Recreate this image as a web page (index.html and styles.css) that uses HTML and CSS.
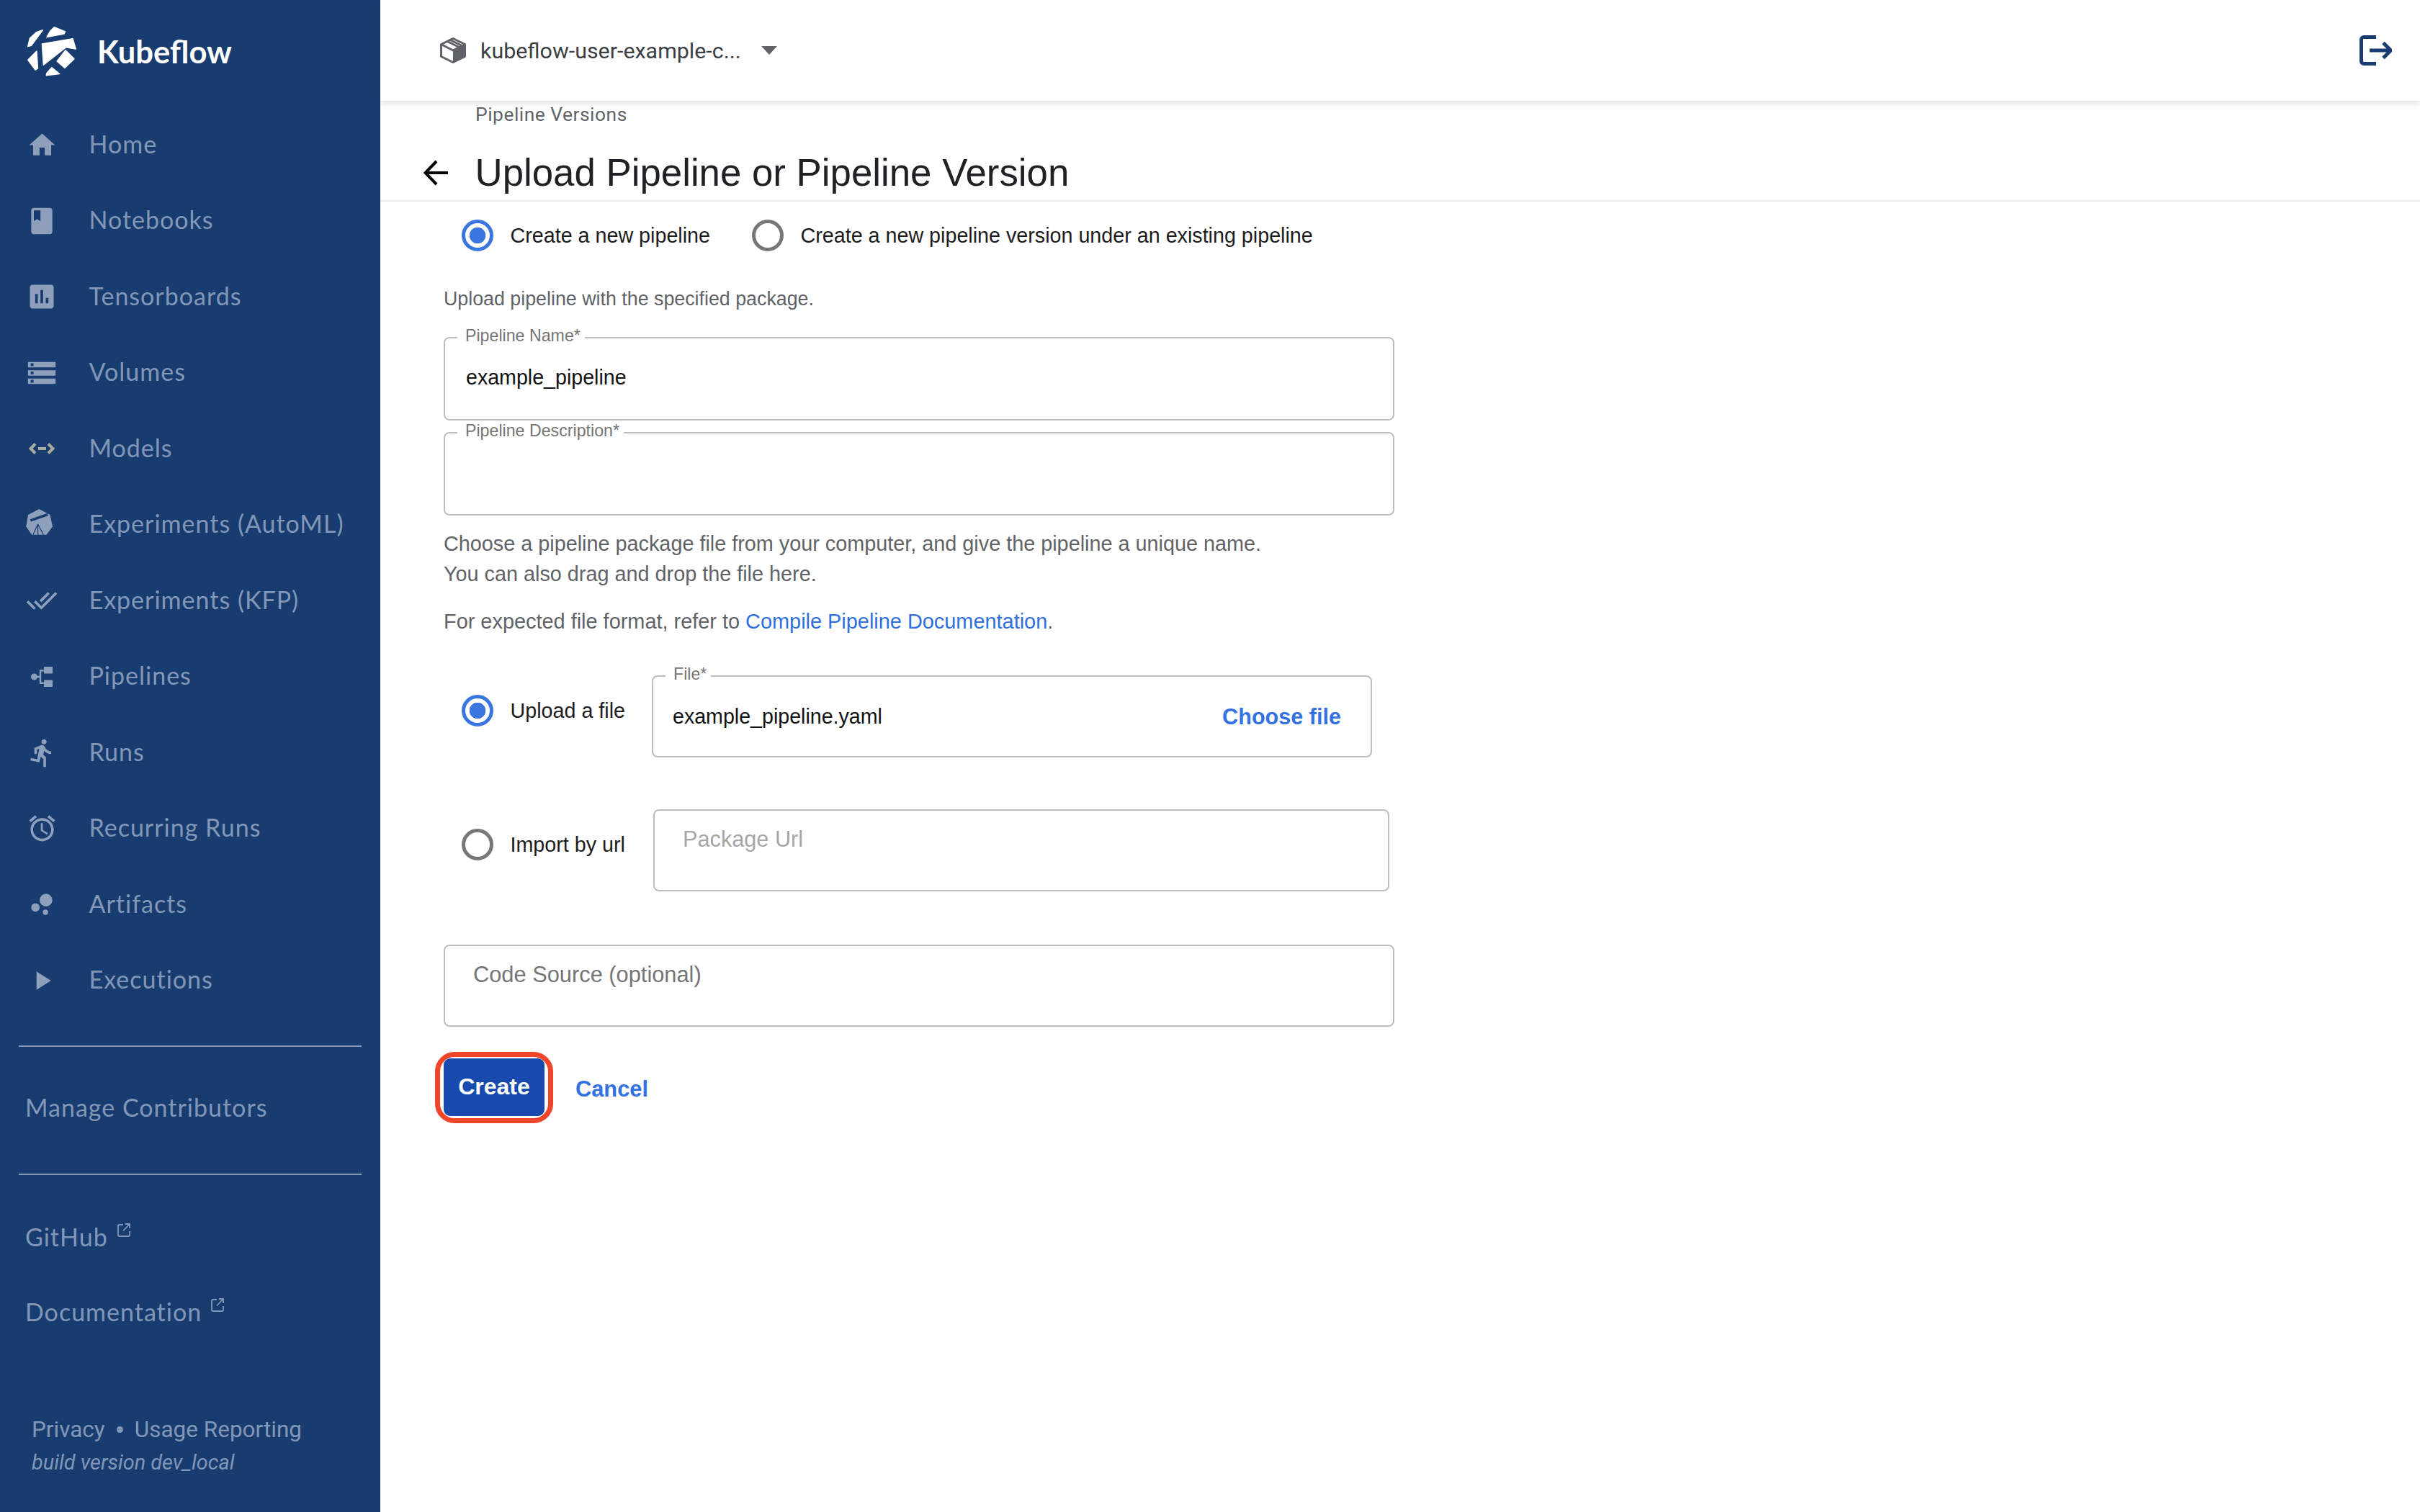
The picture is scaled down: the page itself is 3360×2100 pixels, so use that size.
FILE: index.html
```html
<!DOCTYPE html>
<html lang="en">
<head>
<meta charset="utf-8">
<title>Upload Pipeline or Pipeline Version</title>
<link rel="stylesheet" href="styles.css">
</head>
<body>
<div class="app">
  <aside class="sidebar">
    <div class="brand">
      <svg class="brand-logo" viewBox="0 0 68 69"><g fill="#fff" stroke="#fff" stroke-width="1.5" stroke-linejoin="round">
        <path d="M21.4 4.7 12.2 8 3.4 16.3 .8 27.5 5.4 26.3 12.9 16.3z"/>
        <path d="M37.3 .8 52.5 7 51 10 27 14.5 31.6 6.3z"/>
        <path d="M20.4 24 63 16.8 67.3 31 53.6 28.7 22.4 53.2z"/>
        <path d="M52.9 32.8 65 44.7 51.9 57.5 41.2 48z"/>
        <path d="M12.9 34 .8 46.3 11.2 60.2 14.4 58z"/>
        <path d="M33.9 56.8 44.6 65.5 26.3 67.8 26.8 64.7z"/>
      </g></svg>
      <span class="brand-name">Kubeflow</span>
    </div>
    <nav class="nav">
      <a class="nav-item"><span class="nav-icon"><svg viewBox="0 0 24 24" width="43" height="43"><path d="M10 20v-6h4v6h5v-8h3L12 3 2 12h3v8z"/></svg></span>Home</a>
      <a class="nav-item"><span class="nav-icon"><svg viewBox="0 0 24 24" width="44" height="44"><path d="M18 2H6c-1.1 0-2 .9-2 2v16c0 1.1.9 2 2 2h12c1.100 0 2-.9 2-2V4c0-1.100-.9-2-2-2zM6 4h5v8l-2.500-1.500L6 12V4z"/></svg></span>Notebooks</a>
      <a class="nav-item"><span class="nav-icon"><svg viewBox="0 0 24 24" width="44" height="44"><path d="M19 3H5c-1.100 0-2 .9-2 2v14c0 1.100.9 2 2 2h14c1.100 0 2-.9 2-2V5c0-1.100-.9-2-2-2zM9 17H7v-7h2v7zm4 0h-2V7h2v10zm4 0h-2v-4h2v4z"/></svg></span>Tensorboards</a>
      <a class="nav-item"><span class="nav-icon"><svg viewBox="0 0 24 24" width="46" height="46"><path d="M2 20h20v-4H2v4zm2-3h2v2H4v-2zM2 4v4h20V4H2zm4 3H4V5h2v2zm-4 7h20v-4H2v4zm2-3h2v2H4v-2z"/></svg></span>Volumes</a>
      <a class="nav-item"><span class="nav-icon"><svg viewBox="0 0 36 16" width="36" height="16" class="icon-models"><path d="M9 1.500 2.500 8 9 14.500M27 1.500 33.500 8 27 14.500M13 8h11"/></svg></span>Models</a>
      <a class="nav-item"><span class="nav-icon"><svg viewBox="0 0 44 44" width="44" height="44" class="icon-katib"><path class="katib-body" d="M18.300 0 33.500 8 37 24.200 28.500 35.800H8.100L.3 24.200 3 8z"/><path class="katib-cut" d="M6.400 15.800 30.200 7.500"/><path class="katib-line" d="M16.600 21 9.800 35.800M16.600 21 24.400 35.800M16.600 21V35.800"/></svg></span>Experiments (AutoML)</a>
      <a class="nav-item"><span class="nav-icon"><svg viewBox="0 0 24 24" width="44" height="44"><path d="M18 7l-1.410-1.410-6.340 6.340 1.410 1.410L18 7zm4.240-1.410L11.660 16.170 7.480 12l-1.410 1.410L11.660 19l12-12-1.420-1.410zM.41 13.410L6 19l1.410-1.410L1.830 12 .41 13.410z"/></svg></span>Experiments (KFP)</a>
      <a class="nav-item"><span class="nav-icon"><svg viewBox="0 0 30 28" width="30" height="28" class="icon-pipe"><circle cx="4.500" cy="14" r="4.500"/><path d="M6 12.800h5.800V4h6v2.400h-3.600v15.200h3.600V24h-6v-8.800H6z"/><rect x="18" y="0" width="12" height="9.500"/><rect x="18" y="18.500" width="12" height="9.500"/></svg></span>Pipelines</a>
      <a class="nav-item"><span class="nav-icon"><svg viewBox="0 0 24 24" width="43" height="43"><path d="M13.490 5.480c1.100 0 2-.9 2-2s-.9-2-2-2-2 .9-2 2 .9 2 2 2zm-3.600 13.900l1-4.400 2.100 2v6h2v-7.500l-2.100-2 .6-3c1.300 1.500 3.300 2.500 5.500 2.500v-2c-1.900 0-3.500-1-4.300-2.400l-1-1.600c-.4-.6-1-1-1.700-1-.3 0-.5.1-.8.1l-5.200 2.200v4.700h2v-3.400l1.800-.7-1.600 8.100-4.900-1-.4 2 7 1.400z"/></svg></span>Runs</a>
      <a class="nav-item"><span class="nav-icon"><svg viewBox="0 0 24 24" width="43" height="43"><path d="M22 5.720l-4.600-3.860-1.290 1.530 4.600 3.860L22 5.720zM7.880 3.390L6.600 1.860 2 5.710l1.290 1.530 4.590-3.850zM12.500 8H11v6l4.750 2.850.75-1.230-4-2.370V8zM12 4c-4.970 0-9 4.030-9 9s4.030 9 9 9 9-4.030 9-9-4.030-9-9-9zm0 16c-3.870 0-7-3.130-7-7s3.130-7 7-7 7 3.130 7 7-3.130 7-7 7z"/></svg></span>Recurring Runs</a>
      <a class="nav-item"><span class="nav-icon"><svg viewBox="0 0 24 24" width="44" height="44"><circle cx="7.200" cy="14.400" r="3.200"/><circle cx="14.800" cy="18" r="2"/><circle cx="15.200" cy="8.800" r="4.800"/></svg></span>Artifacts</a>
      <a class="nav-item"><span class="nav-icon"><svg viewBox="0 0 24 24" width="44" height="44"><path d="M8 5v14l11-7z"/></svg></span>Executions</a>
    </nav>
    <div class="side-rule"></div>
    <a class="side-link side-link-manage">Manage Contributors</a>
    <div class="side-rule side-rule-second"></div>
    <a class="side-link">GitHub<svg class="ext" viewBox="0 0 18 19"><path d="M8 2H2.500A1.500 1.500 0 0 0 1 3.500v13A1.500 1.500 0 0 0 2.500 18h13a1.500 1.500 0 0 0 1.500-1.500V11M11 1h6v6M17 1 8 10.500"/></svg></a>
    <a class="side-link">Documentation<svg class="ext" viewBox="0 0 18 19"><path d="M8 2H2.500A1.500 1.500 0 0 0 1 3.500v13A1.500 1.500 0 0 0 2.500 18h13a1.500 1.500 0 0 0 1.500-1.500V11M11 1h6v6M17 1 8 10.500"/></svg></a>
    <div class="side-foot">
      <div class="foot-links"><span>Privacy</span><span class="foot-dot"></span><span>Usage Reporting</span></div>
      <div class="foot-build">build version dev_local</div>
    </div>
  </aside>

  <main class="main">
    <header class="topbar">
      <div class="ns">
        <svg class="ns-icon" viewBox="0 0 36 36"><path class="ns-right" d="M18 18 35 9v18L18 36z"/><path class="ns-out" d="M18 1.500 34.500 9.500v17L18 34.500 1.500 26.500v-17zM1.500 9.500 18 18l16.500-8.500M10 5.500l16.500 8M14 3.500l16.500 8"/></svg>
        <span class="ns-name">kubeflow-user-example-c...</span>
        <span class="ns-caret"></span>
      </div>
      <svg class="logout" viewBox="0 0 45 42"><path d="M23 2.500H6A3.500 3.500 0 0 0 2.500 6v30A3.500 3.500 0 0 0 6 39.500h17M14 21h29M33 10.500 43.500 21 33 31.500"/></svg>
    </header>

    <div class="crumb">Pipeline Versions</div>
    <div class="title-row">
      <svg class="back" viewBox="0 0 36 36"><path d="M34 18H4M18 2 2.500 18 18 34"/></svg>
      <h1 class="title">Upload Pipeline or Pipeline Version</h1>
    </div>

    <form class="form">
      <div class="choice-row">
        <span class="radio radio-on"></span><span class="choice-text">Create a new pipeline</span>
        <span class="radio radio-second"></span><span class="choice-text">Create a new pipeline version under an existing pipeline</span>
      </div>
      <p class="lead">Upload pipeline with the specified package.</p>

      <div class="field field-name"><span class="field-label">Pipeline Name*</span><span class="field-value">example_pipeline</span></div>
      <div class="field field-desc"><span class="field-label">Pipeline Description*</span></div>

      <p class="help help-first">Choose a pipeline package file from your computer, and give the pipeline a unique name.<br>You can also drag and drop the file here.</p>
      <p class="help help-second">For expected file format, refer to <a class="link">Compile Pipeline Documentation</a>.</p>

      <div class="source-row source-upload">
        <div class="source-choice source-choice-file"><span class="radio radio-on"></span><span class="choice-text">Upload a file</span></div>
        <div class="field field-file"><span class="field-label">File*</span><span class="field-value">example_pipeline.yaml</span><span class="choose">Choose file</span></div>
      </div>
      <div class="source-row source-url">
        <div class="source-choice"><span class="radio"></span><span class="choice-text">Import by url</span></div>
        <div class="field field-url"><span class="placeholder">Package Url</span></div>
      </div>
      <div class="field field-code"><span class="placeholder placeholder-code">Code Source (optional)</span></div>

      <div class="actions">
        <button class="btn-create" type="button">Create</button>
        <a class="btn-cancel">Cancel</a>
      </div>
    </form>
  </main>
</div>
</body>
</html>
```
FILE: styles.css
```css
* { box-sizing: border-box; }
html, body { margin: 0; padding: 0; height: 2100px; overflow: hidden; background: #fff; }
body { font-family: "Liberation Sans", Arial, sans-serif; }
.app { display: flex; width: 3360px; height: 2100px; }

/* sidebar */
.sidebar { width: 528px; flex: none; height: 100%; background: #183c70; display: flex; flex-direction: column; color: #8297b8; font-family: Lato, "Noto Sans", sans-serif; font-size: 34px; letter-spacing: 1px; }
.brand { height: 146.500px; padding: 37px 0 0 38px; display: flex; align-items: flex-start; gap: 29px; }
.brand-logo { width: 68px; height: 69px; flex: none; }
.brand-name { color: #fff; font-size: 43.500px; font-weight: 700; letter-spacing: 0; line-height: 68px; }
.nav { display: flex; flex-direction: column; }
.nav-item { height: 105.500px; display: flex; align-items: center; padding-left: 36px; }
.nav-icon { width: 44px; height: 44px; margin: 4px 43.500px 0 0; display: flex; align-items: center; justify-content: center; flex: none; }
.nav-icon svg { fill: #8e9fbc; flex: none; }
.nav-icon .icon-models { fill: none; stroke: #a8aba0; stroke-width: 4; }
.nav-icon .katib-body { fill: #8e9fbc; }
.nav-icon .katib-cut { fill: none; stroke: #183c70; stroke-width: 3.500; }
.nav-icon .katib-line { fill: none; stroke: #183c70; stroke-width: 1.200; }
.nav-icon .icon-pipe path { fill: #8e9fbc; }
.side-rule { height: 2px; margin: 39.500px 26px 30px 26px; background: #8296b5; }
.side-rule-second { margin: 40px 26px 33px 26px; }
.side-link { height: 104px; padding-left: 35px; display: flex; align-items: center; }
.side-link-manage { height: 106px; }
.ext { width: 18px; height: 19px; align-self: flex-start; margin: 34px 0 0 13px; fill: none; stroke: #8297b8; stroke-width: 1.800; }
.side-foot { margin-top: auto; padding: 0 0 46px 44px; font-family: Roboto, sans-serif; letter-spacing: 0; }
.foot-links { display: flex; align-items: center; height: 46px; font-size: 31.500px; }
.foot-dot { width: 9px; height: 9px; border-radius: 50%; background: #8297b8; margin: 0 16px; }
.foot-build { height: 46px; line-height: 46px; font-size: 28.900px; font-style: italic; }

/* main column */
.main { flex: 1; min-width: 0; display: flex; flex-direction: column; }
.topbar { height: 140px; flex: none; display: flex; align-items: center; justify-content: space-between; padding: 0 39px 0 83px; box-shadow: 0 3px 8px rgba(60, 64, 67, .18); background: #fff; }
.ns { display: flex; align-items: center; }
.ns-icon { width: 36px; height: 36px; flex: none; }
.ns-right { fill: #5f6368; }
.ns-out { fill: none; stroke: #5f6368; stroke-width: 3; stroke-linejoin: round; }
.ns-name { margin-left: 20px; font-family: Roboto, sans-serif; font-size: 30.400px; color: #3c4043; }
.ns-caret { margin-left: 28px; width: 0; height: 0; border-left: 11px solid transparent; border-right: 11px solid transparent; border-top: 12px solid #5f6368; }
.logout { width: 45px; height: 42px; fill: none; stroke: #183c70; stroke-width: 5; }
.crumb { height: 38px; line-height: 38px; padding-left: 132px; font-family: Roboto, sans-serif; font-size: 26.400px; letter-spacing: .5px; color: #5f6368; }
.title-row { height: 102px; padding: 32px 0 8px 60px; display: flex; align-items: center; gap: 35.500px; border-bottom: 2px solid #e8eaed; }
.back { width: 36px; height: 36px; fill: none; stroke: #000; stroke-width: 4; flex: none; margin-top: 0; }
.title { margin: 0; font-size: 52.800px; font-weight: 400; line-height: 60px; color: #202124; }

/* form */
.form { padding-left: 88px; width: 1408px; }
.choice-row { display: flex; align-items: center; padding: 25px 0 0 25px; }
.radio { width: 44px; height: 44px; border-radius: 50%; border: 5px solid #777; flex: none; background: #fff; }
.radio-on { border-color: #3a76e0; background: radial-gradient(circle, #3a76e0 0 11px, #fff 11.500px); }
.radio-second { margin-left: 58px; }
.choice-text { margin-left: 23.500px; font-size: 28.700px; color: #1c1c1c; line-height: 44px; }
.lead { margin: 46px 0 0; font-size: 26.800px; line-height: 40px; color: #5f6368; }
.field { position: relative; border: 2px solid #bdbdbd; border-radius: 8px; background: #fff; display: flex; align-items: center; padding: 0 29px; }
.field-name { height: 116px; margin-top: 33px; width: 1320px; padding-bottom: 4px; }
.field-desc { height: 116px; margin-top: 16px; width: 1320px; }
.field-label { position: absolute; left: 17px; top: -16px; padding: 0 6px 0 11px; background: #fff; font-size: 23.200px; line-height: 24px; color: #757575; }
.field-value { font-size: 28.600px; color: #111; }
.help { margin: 0; font-size: 28.800px; line-height: 42px; color: #5f6368; }
.help-first { margin-top: 18px; }
.help-second { margin-top: 24px; font-size: 28.900px; }
.link { color: #2f6fdf; }
.source-row { display: flex; align-items: flex-start; padding-left: 25px; }
.source-upload { margin-top: 54px; }
.source-url { margin-top: 72px; }
.source-choice { display: flex; align-items: center; width: 265px; margin-top: 27px; flex: none; }
.source-choice-file { width: 264px; }
.field-file { width: 1000px; height: 114px; padding-left: 27px; }
.choose { margin-left: auto; margin-right: 40px; font-size: 30.600px; font-weight: 700; color: #3372e0; }
.field-file .choose { margin-right: 12px; }
.field-url { width: 1022px; height: 114px; margin-left: 1px; align-items: flex-start; padding: 20px 39px; }
.placeholder { font-size: 30.700px; line-height: 40px; color: #a6a6a6; }
.field-code { width: 1320px; height: 114px; margin-top: 74px; align-items: flex-start; padding: 20px 39px; }
.placeholder-code { font-size: 30.800px; color: #757575; }
.actions { display: flex; align-items: center; margin-top: 44px; }
.btn-create { position: relative; width: 140px; height: 80px; border: 0; border-radius: 9px; background: #184aad; color: #fff; font-family: inherit; font-size: 32px; font-weight: 700; padding: 0 0 2px; }
.btn-create::after { content: ""; position: absolute; inset: -9px -12px -10px -12px; border: 7px solid #f04528; border-radius: 27px; }
.btn-cancel { margin: 6px 0 0 43px; font-size: 30.800px; font-weight: 700; color: #3372e0; }
```
